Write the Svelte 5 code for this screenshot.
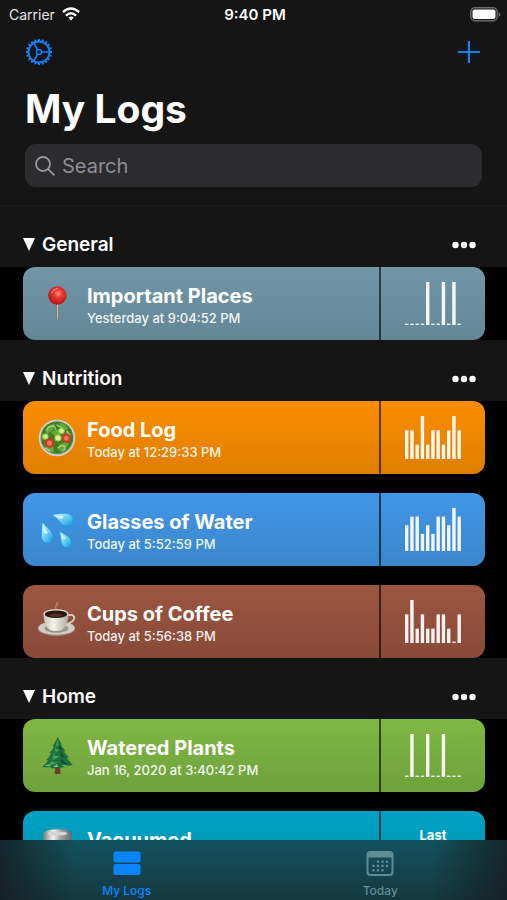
<!--
  Log list screen: large title, search, collapsible groups of log cards with a
  small history chart each, and the tab bar at the bottom.
-->
<script lang="ts">
  type Log = {
    name: string;
    when?: string;
    icon: string;
    color: string;
    bars?: number[];
    stat?: string;
  };
  type Group = { name: string; open: boolean; logs: Log[] };

  let groups = $state<Group[]>([
    {
      name: 'General',
      open: true,
      logs: [
        {
          name: 'Important Places',
          when: 'Yesterday at 9:04:52 PM',
          icon: 'pin',
          color: 'slate',
          bars: [0, 0, 0, 0, 1, 0, 0, 1, 0, 1, 0],
        },
      ],
    },
    {
      name: 'Nutrition',
      open: true,
      logs: [
        {
          name: 'Food Log',
          when: 'Today at 12:29:33 PM',
          icon: 'salad',
          color: 'orange',
          bars: [2, 2, 1, 3, 1, 2, 2, 1, 2, 3, 2],
        },
        {
          name: 'Glasses of Water',
          when: 'Today at 5:52:59 PM',
          icon: 'drops',
          color: 'blue',
          bars: [3, 4, 4, 2, 3, 2, 4, 4, 3, 5, 4],
        },
        {
          name: 'Cups of Coffee',
          when: 'Today at 5:56:38 PM',
          icon: 'coffee',
          color: 'brown',
          bars: [2, 3, 1, 2, 1, 1, 2, 2, 1, 0, 2],
        },
      ],
    },
    {
      name: 'Home',
      open: true,
      logs: [
        {
          name: 'Watered Plants',
          when: 'Jan 16, 2020 at 3:40:42 PM',
          icon: 'tree',
          color: 'green',
          bars: [0, 1, 0, 0, 1, 0, 0, 1, 0, 0, 0],
        },
        { name: 'Vacuumed', icon: 'bin', color: 'cyan', stat: 'Last' },
      ],
    },
  ]);

  let query = $state('');
  let tab = $state('logs');

  const matches = (log: Log) => log.name.toLowerCase().includes(query.trim().toLowerCase());

  // Gear teeth, evenly spaced round the ring.
  const teeth = Array.from({ length: 20 }, (_, i) => i * 18);

  // Calendar dots as [column, row]; the first row starts one column in.
  const dots = [
    [1, 0], [2, 0], [3, 0],
    [0, 1], [1, 1], [2, 1], [3, 1],
    [0, 2], [1, 2], [2, 2],
  ];
</script>

{#snippet chart(bars: number[])}
  {@const top = Math.max(...bars)}
  <svg class="chart" viewBox="0 0 56 43" aria-hidden="true">
    {#each bars as n, i}
      {@const h = n ? (n / top) * 43 : 1.4}
      <rect x={i * 5.25} y={43 - h} width="3.4" height={h} />
    {/each}
  </svg>
{/snippet}

{#snippet emoji(name: string)}
  <svg class="emoji" viewBox="0 0 40 40" aria-hidden="true">
    {#if name === 'pin'}
      <defs>
        <radialGradient id="pin-head" cx=".55" cy=".4" r=".6">
          <stop offset="0" stop-color="#ff8d78" />
          <stop offset=".4" stop-color="#e8392f" />
          <stop offset="1" stop-color="#b3121a" />
        </radialGradient>
      </defs>
      <path d="M19 20h3l-.3 16h-2.400z" fill="#85736c" />
      <path d="M20 20h1.200l-.2 15.500h-.8z" fill="#d5c9c2" />
      <circle cx="20.400" cy="11.500" r="9.200" fill="url(#pin-head)" />
      <path d="M14.500 9q2-4 6-4.500" fill="none" stroke="#ffb2a5" stroke-width="1.200" stroke-linecap="round" opacity=".7" />
    {:else if name === 'salad'}
      <circle cx="20" cy="20" r="18.300" fill="#cdd2cf" />
      <circle cx="20" cy="20" r="16.600" fill="#8d9c80" />
      <circle cx="20" cy="19.500" r="16" fill="#3f7f22" />
      <g fill="#69a938">
        <path d="M8 12q5-7 10-6l-2 6-6 4zM22 5q7 0 9 6l-5 2zM29 13q6 3 5 9l-5-3zM8 28q2 6 9 6l-1-5z" />
        <path d="M14 14l6-3 4 4-4 5zM22 27l6-3 4 2-5 6-5 1zM5 16l5 1-2 5-4-1z" />
      </g>
      <g fill="none" stroke="#b5d78a" stroke-width="1.200" stroke-linecap="round">
        <path d="M10 12q1-4 6-4 3 1 2 3M21 30q4-4 7-1 1 3-3 4M20 7l5 3M30 13l3 4M8 30l5 3" />
      </g>
      <circle cx="12.500" cy="25" r="5" fill="#c93c2b" />
      <circle cx="12.500" cy="25" r="2.600" fill="#ec7a5f" />
      <circle cx="29.300" cy="20.200" r="4.800" fill="#c93c2b" />
      <circle cx="29.300" cy="20.200" r="2.400" fill="#ec7a5f" />
      <g fill="#d5ee94" stroke="#8cc63f" stroke-width="1">
        <circle cx="21" cy="20" r="3.200" />
        <circle cx="8.500" cy="18.500" r="2.700" />
        <circle cx="24.500" cy="13" r="2.800" />
      </g>
    {:else if name === 'drops'}
      <defs>
        <linearGradient id="drop" x1="0" y1="0" x2="1" y2="1">
          <stop offset="0" stop-color="#d8f6ff" />
          <stop offset=".5" stop-color="#6fcdf6" />
          <stop offset="1" stop-color="#0a8fdc" />
        </linearGradient>
      </defs>
      <g fill="url(#drop)" stroke="#1797dc" stroke-width=".8">
        <path d="M14 4.800C23 3 29 2.600 33 4.500c4.500 2.300 4.500 9.300-.2 11.500-4.300 2-7.800-.6-10-4C20.500 8.800 17.500 6.500 14 4.800z" />
        <path d="M5.200 12C12 19 17.600 23 16.800 28.500 16 33.600 8.500 35 5.600 30.500 3.200 26.700 4.500 20 5.200 12z" />
        <path d="M22.600 21.500C30 25 35.500 28.500 35 33.500c-.6 5-7.600 5.600-9.800 1.500-1.800-3.400-1.700-8-2.600-13.500z" />
      </g>
      <g fill="#eefcff" opacity=".7">
        <path d="M18 6q6-1 9 .2-1 2-3 2.800Q21 7.600 18 6z" />
        <path d="M6.400 16q3 4 4.600 7-2.500 1.500-4.500 0-.6-4-.1-7zM24.500 24.500q3 2 4 4-1.500 1.300-3 .5z" />
      </g>
    {:else if name === 'coffee'}
      <defs>
        <linearGradient id="cup" x1="0" x2="1">
          <stop offset="0" stop-color="#c5c2b8" />
          <stop offset=".4" stop-color="#f4f2ec" />
          <stop offset="1" stop-color="#aaa89e" />
        </linearGradient>
      </defs>
      <path d="M20 8q-3-3 0-5 1-1.500-.5-3" fill="none" stroke="#dccfc8" stroke-width="1.600" opacity=".35" />
      <ellipse cx="19.500" cy="27" rx="18.300" ry="7.200" fill="#8d897f" />
      <ellipse cx="19.500" cy="26" rx="18.300" ry="6.800" fill="#cfccc2" />
      <ellipse cx="19.500" cy="26.500" rx="12" ry="4.300" fill="#9a968c" />
      <path d="M30 14c6-3 9 1 6.200 4.500-2 2.400-5.500 3.500-8.500 4.500" fill="none" stroke="#d9d6cd" stroke-width="1.600" />
      <path d="M6.500 12c0 7 2.500 13 6.500 16q6 2 12 0c4-3 6.500-9 6.500-16z" fill="url(#cup)" />
      <ellipse cx="19" cy="11.800" rx="12.500" ry="4.600" fill="#e4e1d8" />
      <ellipse cx="19" cy="12.200" rx="11.300" ry="3.800" fill="#2b1510" />
      <path d="M11 13q8-3 16 0-8 4-16 0z" fill="#5b3020" />
    {:else if name === 'tree'}
      <path d="M18.200 31h4.800l.6 6.500q-3 1-6 0z" fill="#6d4128" />
      <path d="M20.600 1l4.200 7.500-1 .3 4.500 6.200-1.500.5 5 6-2 .5 6 7q-4 1-6.500.5-4 3.500-8.500 2-5 2.500-8-.8-3.800 1.200-7.800.2 5-4 6.200-6.700l-2.200.2q4-4 5-6.800l-1.500-.3q3-3.500 4.200-6.600l-1-.2z" fill="#1c713c" />
      <path d="M20.600 3l1 6-4.500 3 5 2-7 5 8 1.500-10 5 8 1-10 4q3-5 5.500-8.500l-2-.3 4.500-6.200-1.200-.5z" fill="#43a05a" />
      <path d="M22 8l3 6-3-1.500zM23.500 15l5 7-5-2zM24 22.500l7.500 7-7-2.500z" fill="#0f4d31" />
      <path d="M7 29.500l6-1.500-1 2zM16 31l4-3 1 3zM25 29l6 .500-4 1z" fill="#7cc47a" />
    {:else}
      <defs>
        <linearGradient id="steel" x1="0" x2="1">
          <stop offset="0" stop-color="#777b80" />
          <stop offset=".35" stop-color="#f2f2f2" />
          <stop offset=".6" stop-color="#a2a2a4" />
          <stop offset="1" stop-color="#6b6669" />
        </linearGradient>
      </defs>
      <path d="M6 6l3 29q11 5 22 0l4-29z" fill="url(#steel)" />
      <ellipse cx="20.500" cy="6" rx="14.500" ry="4.800" fill="url(#steel)" />
      <ellipse cx="20.500" cy="5.500" rx="10" ry="2" fill="#d6d6d8" />
    {/if}
  </svg>
{/snippet}

<div class="screen">
  <header class="top">
    <div class="status">
      <div class="carrier">
        <span>Carrier</span>
        <svg width="18" height="14" viewBox="0 0 18 14" aria-hidden="true">
          <g fill="none" stroke="#fff" stroke-width="2.300">
            <path d="M.9 5.200Q9-2.200 17.100 5.200" />
            <path d="M3.900 8.600q5.100-4.600 10.200 0" />
          </g>
          <path d="M6.300 10.600q2.700-2.300 5.400 0L9 13.600z" fill="#fff" />
        </svg>
      </div>
      <time>9:40 PM</time>
      <svg class="battery" width="31" height="15" viewBox="0 0 31 15" aria-label="Battery full">
        <rect x=".8" y=".8" width="26.400" height="13" rx="4" fill="none" stroke="#6c6c6e" stroke-width="1.400" />
        <rect x="2.500" y="2.500" width="23" height="9.600" rx="2" fill="#fff" />
        <path d="M28.700 5v4.800q1.600-.6 1.600-2.400T28.700 5z" fill="#6c6c6e" />
      </svg>
    </div>

    <div class="actions">
      <button aria-label="Settings">
        <svg width="28" height="28" viewBox="-14 -14 28 28">
          <g stroke="#0a84ff" fill="none">
            <circle r="10.500" stroke-width="1.800" />
            <circle r="2.500" stroke-width="1.400" />
            <path d="M2.500 0H10.500M-1.300-2.200L-5.300-9.100M-1.300 2.200L-5.300 9.100" stroke-width="1.600" />
            {#each teeth as a}
              <path d="M11 0H13" stroke-width="2" transform="rotate({a})" />
            {/each}
          </g>
        </svg>
      </button>
      <button aria-label="Add log">
        <svg width="22" height="22" viewBox="0 0 22 22">
          <path d="M11 0v22M0 11h22" stroke="#0a84ff" stroke-width="2" />
        </svg>
      </button>
    </div>

    <h1>My Logs</h1>

    <label class="search">
      <svg width="20" height="20" viewBox="0 0 20 20" aria-hidden="true">
        <g fill="none" stroke="#98989e" stroke-width="1.800" stroke-linecap="round">
          <circle cx="8" cy="8" r="7" />
          <path d="M13.200 13.200l5.600 5.600" />
        </g>
      </svg>
      <input type="text" placeholder="Search" aria-label="Search" bind:value={query} />
    </label>
  </header>

  <main>
    {#each groups as group}
      <section>
        <div class="group-head">
          <h2>
            <button aria-expanded={group.open} onclick={() => (group.open = !group.open)}>
              <svg class:closed={!group.open} width="12" height="13" viewBox="0 0 12 13">
                <path d="M0 0h12L6 13z" fill="#fff" />
              </svg>
              {group.name}
            </button>
          </h2>
          <button class="more" aria-label="{group.name} options">
            <svg width="24" height="8" viewBox="0 0 24 8" fill="#fff">
              <circle cx="3.500" cy="4" r="3.200" />
              <circle cx="12" cy="4" r="3.200" />
              <circle cx="20.500" cy="4" r="3.200" />
            </svg>
          </button>
        </div>
        {#if group.open}
          <div class="cards">
            {#each group.logs.filter(matches) as log}
              <article class="card {log.color}">
                <div class="info">
                  {@render emoji(log.icon)}
                  <div class="text">
                    <h3>{log.name}</h3>
                    <p>{log.when ?? ''}</p>
                  </div>
                </div>
                <div class="side">
                  {#if log.bars}
                    {@render chart(log.bars)}
                  {:else}
                    <span class="stat">{log.stat}</span>
                  {/if}
                </div>
              </article>
            {/each}
          </div>
        {/if}
      </section>
    {/each}
  </main>

  <nav>
    <button class:active={tab === 'logs'} onclick={() => (tab = 'logs')}>
      <svg width="28" height="26" viewBox="0 0 28 26" fill="currentColor">
        <rect x=".5" y="1.500" width="27" height="11" rx="2" />
        <rect x=".5" y="14" width="27" height="11" rx="2" />
      </svg>
      My Logs
    </button>
    <button class:active={tab === 'today'} onclick={() => (tab = 'today')}>
      <svg width="28" height="26" viewBox="0 0 28 26" fill="currentColor">
        <rect x="1.500" y="2" width="25" height="23" rx="3" fill="none" stroke="currentColor" stroke-width="2" />
        <path d="M1.500 3h25v4.500h-25z" />
        {#each dots as [x, y]}
          <rect x={6.300 + x * 4.500} y={10.500 + y * 4.300} width="2.300" height="2.300" />
        {/each}
      </svg>
      Today
    </button>
  </nav>
</div>

<style>
  :global(body) {
    background: #000;
  }
  .screen {
    display: flex;
    flex-direction: column;
    height: 100vh;
    background: #000;
    color: #fff;
    font-family: Inter, 'Liberation Sans', sans-serif;
  }
  button {
    background: none;
    border: none;
    padding: 0;
    color: inherit;
    font: inherit;
    cursor: pointer;
  }
  svg {
    display: block;
    flex: none;
  }
  h1,
  h2,
  h3,
  p {
    margin: 0;
  }
  .top {
    flex: none;
    background: #151515;
    border-bottom: 1px solid #1d1d1d;
    padding-bottom: 18px;
  }
  .status {
    display: grid;
    grid-template-columns: 1fr auto 1fr;
    align-items: center;
    height: 28px;
    padding: 0 6px 0 9px;
    font-size: 14px;
  }
  .carrier {
    display: flex;
    align-items: center;
    gap: 7px;
    color: #e4e4e4;
  }
  time {
    font-size: 15px;
    font-weight: 600;
  }
  .battery {
    justify-self: end;
  }
  .actions {
    display: flex;
    align-items: center;
    justify-content: space-between;
    height: 48px;
    padding: 0 27px 0 25px;
  }
  h1 {
    padding: 8px 25px;
    font-size: 39px;
    font-weight: 700;
    line-height: 50px;
  }
  .search {
    display: flex;
    align-items: center;
    gap: 7px;
    height: 43px;
    margin: 2px 25px 0;
    padding: 0 10px;
    border-radius: 11px;
    background: #2c2c2e;
  }
  .search input {
    flex: 1;
    min-width: 0;
    padding: 0;
    border: none;
    outline: none;
    background: none;
    color: #fff;
    font: inherit;
    font-size: 20px;
  }
  .search input::placeholder {
    color: #8e8e93;
    opacity: 1;
  }
  main {
    flex: 1;
    min-height: 0;
    overflow: hidden;
  }
  .group-head {
    display: flex;
    align-items: center;
    justify-content: space-between;
    height: 45px;
    padding: 16px 31px 0 23px;
    background: #151515;
  }
  h2 {
    font-size: 19px;
    font-weight: 600;
  }
  h2 button {
    display: flex;
    align-items: center;
    gap: 7px;
  }
  h2 .closed {
    transform: rotate(-90deg);
  }
  .cards {
    display: flex;
    flex-direction: column;
    gap: 19px;
    padding: 0 22px 0 23px;
  }
  .card {
    display: flex;
    height: 73px;
    border-radius: 12px;
    overflow: hidden;
  }
  .info {
    flex: 1;
    min-width: 0;
    display: flex;
    align-items: center;
    gap: 10px;
    padding-left: 14px;
  }
  .text {
    padding-top: 2px;
  }
  .emoji {
    width: 40px;
    height: 40px;
  }
  h3 {
    font-size: 20px;
    font-weight: 700;
    line-height: 26px;
  }
  .info p {
    min-height: 18px;
    font-size: 13px;
    font-weight: 500;
    line-height: 18px;
    opacity: 0.9;
  }
  .side {
    display: flex;
    justify-content: center;
    align-items: center;
    width: 104px;
    border-left: 2px solid rgba(0, 0, 0, 0.6);
  }
  .chart {
    width: 56px;
    height: 43px;
    fill: #fff;
    opacity: 0.93;
  }
  .stat {
    align-self: flex-start;
    margin-top: 16px;
    font-size: 13px;
    font-weight: 700;
    line-height: 16px;
  }
  .slate {
    background: linear-gradient(#7296a8, #648796);
  }
  .orange {
    background: linear-gradient(#fb8e00, #df7e00);
  }
  .blue {
    background: linear-gradient(#4297e6, #3a86cc);
  }
  .brown {
    background: linear-gradient(#9c5641, #874a38);
  }
  .green {
    background: linear-gradient(#80b744, #70a13c);
  }
  .cyan {
    background: linear-gradient(#00a2c4, #0090ae);
  }
  nav {
    flex: none;
    display: flex;
    height: 60px;
    background:
      linear-gradient(
        90deg,
        rgba(21, 28, 30, 0.8),
        rgba(21, 28, 30, 0) 15%,
        rgba(21, 28, 30, 0) 85%,
        rgba(21, 28, 30, 0.8)
      ),
      linear-gradient(#14525f, #15383f);
  }
  nav button {
    flex: 1;
    display: flex;
    flex-direction: column;
    align-items: center;
    gap: 7px;
    padding-top: 10px;
    color: #5f8e97;
    font-size: 12px;
    font-weight: 500;
    line-height: 16px;
  }
  nav .active {
    color: #0a84ff;
  }
</style>
